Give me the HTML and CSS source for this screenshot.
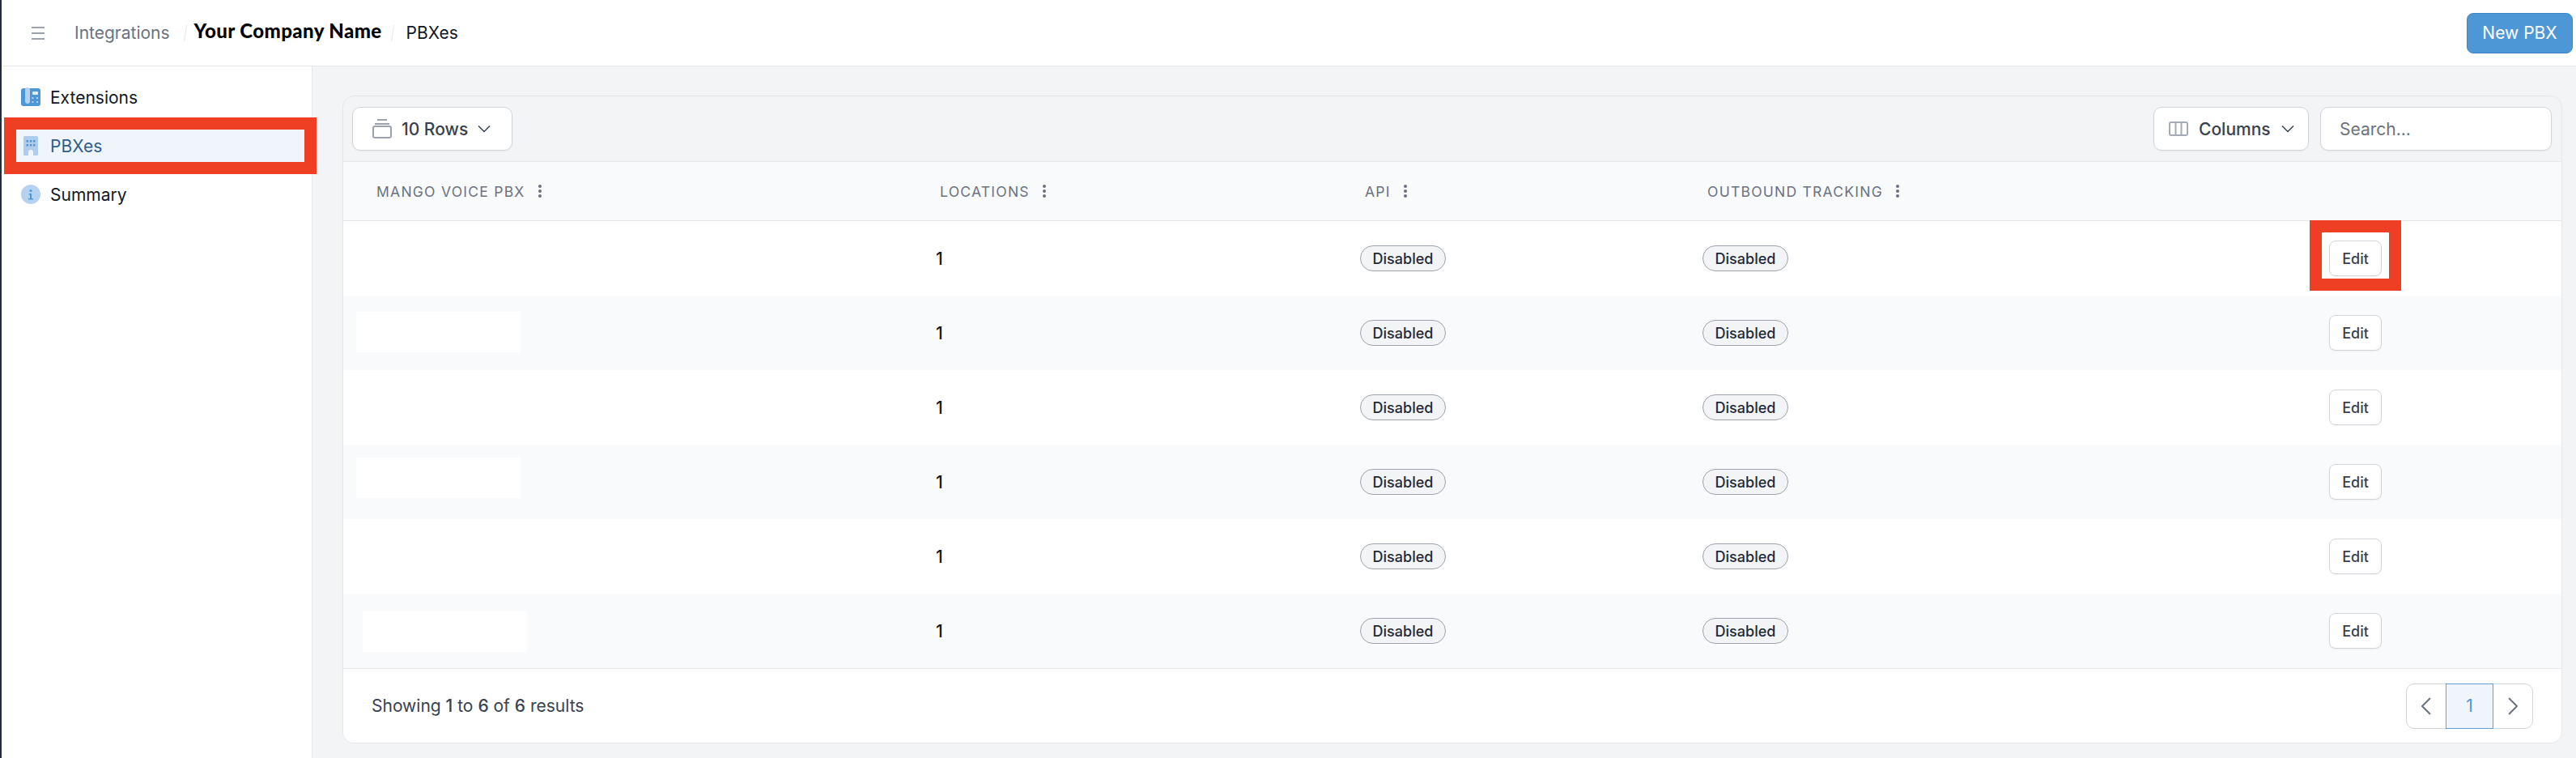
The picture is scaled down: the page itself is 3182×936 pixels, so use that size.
FILE: index.html
```html
<!DOCTYPE html>
<html lang="en">
<head>
<meta charset="utf-8">
<title>PBXes</title>
<link rel="stylesheet" href="styles.css">
</head>
<body>
<header class="topbar">
  <svg class="burger" viewBox="0 0 16 16" width="16" height="16"><path d="M0 1h16M0 8h16M0 15h16" fill="none" stroke="#9ca3af" stroke-width="2"/></svg>
  <span class="crumb crumb-muted">Integrations</span>
  <svg class="slash" viewBox="0 0 4 20" width="4" height="20"><path d="M3.500 0L.5 20" stroke="#e5e7eb" stroke-width="1" fill="none"/></svg>
  <span class="company">Your Company Name</span>
  <svg class="slash" viewBox="0 0 4 20" width="4" height="20"><path d="M3.500 0L.5 20" stroke="#e5e7eb" stroke-width="1" fill="none"/></svg>
  <span class="crumb crumb-last">PBXes</span>
  <button class="btn-primary">New PBX</button>
</header>
<div class="shell">
  <nav class="sidebar">
    <a class="nav-item">
      <svg class="nav-icon" viewBox="0 0 24 24" width="24" height="24"><rect y="1" width="24" height="22" rx="3" fill="#4e97d6"/><rect x="5" y="0" width="6" height="20" rx="3" fill="#b5d3f0"/><rect x="14" y="5" width="7" height="4" rx="1" fill="#dcebf8"/><g fill="#b5d3f0"><rect x="13.500" y="12" width="2" height="2"/><rect x="19" y="12" width="2" height="2"/><rect x="13.500" y="17" width="2" height="2"/><rect x="19" y="17" width="2" height="2"/></g></svg>
      <span>Extensions</span>
    </a>
    <a class="nav-item nav-item-active">
      <svg class="nav-icon" viewBox="0 0 24 24" width="24" height="24"><path d="M3 1.500Q3 0 4.500 0h15Q21 0 21 1.500V22.500Q21 24 19.500 24H15v-4a3 3 0 0 0-6 0v4H4.500Q3 24 3 22.500z" fill="#aecdec"/><g fill="#4e97d6"><rect x="6.500" y="5" width="2.500" height="2.500"/><rect x="10.800" y="5" width="2.500" height="2.500"/><rect x="15" y="5" width="2.500" height="2.500"/><rect x="6.500" y="10" width="2.500" height="2.500"/><rect x="10.800" y="10" width="2.500" height="2.500"/><rect x="15" y="10" width="2.500" height="2.500"/></g></svg>
      <span>PBXes</span>
      <i class="mark mark-nav"></i>
    </a>
    <a class="nav-item">
      <svg class="nav-icon" viewBox="0 0 24 24" width="24" height="24"><circle cx="12" cy="12" r="12" fill="#b5d3f0"/><circle cx="12" cy="7.500" r="1.500" fill="#4e97d6"/><path d="M9.500 11H13v6h2v1.500H9V17h2v-4.500H9.500z" fill="#4e97d6"/></svg>
      <span>Summary</span>
    </a>
  </nav>
  <main class="main">
    <section class="card">
      <div class="toolbar">
        <button class="tool tool-rows">
          <svg viewBox="0 0 24 24" width="24" height="24"><path d="M6 1h12M3 6h18" stroke="#9ca3af" stroke-width="2" fill="none"/><rect x="1" y="9" width="22" height="14" rx="2" stroke="#9ca3af" stroke-width="2" fill="none"/></svg>
          <span>10 Rows</span>
          <svg viewBox="0 0 16 10" width="16" height="10"><path d="M1 1.500l7 7 7-7" stroke="#374151" stroke-width="1.500" fill="none"/></svg>
        </button>
        <div class="spacer"></div>
        <button class="tool tool-cols">
          <svg viewBox="0 0 24 18" width="24" height="18"><rect x="1" y="1" width="22" height="16" rx="2" stroke="#a5abb6" stroke-width="2" fill="none"/><path d="M8.500 1v16M15.500 1v16" stroke="#a5abb6" stroke-width="2" fill="none"/></svg>
          <span>Columns</span>
          <svg viewBox="0 0 16 10" width="16" height="10"><path d="M1 1.500l7 7 7-7" stroke="#374151" stroke-width="1.500" fill="none"/></svg>
        </button>
        <input class="search" type="text" placeholder="Search...">
      </div>
      <div class="row row-head">
        <div class="th th-first">MANGO VOICE PBX<svg class="dots" viewBox="0 0 4 16" width="4" height="16"><g fill="#6b7280"><circle cx="2" cy="2" r="2"/><circle cx="2" cy="8" r="2"/><circle cx="2" cy="14" r="2"/></g></svg></div>
        <div class="th th-loc">LOCATIONS<svg class="dots" viewBox="0 0 4 16" width="4" height="16"><g fill="#6b7280"><circle cx="2" cy="2" r="2"/><circle cx="2" cy="8" r="2"/><circle cx="2" cy="14" r="2"/></g></svg></div>
        <div class="th th-badge">API<svg class="dots" viewBox="0 0 4 16" width="4" height="16"><g fill="#6b7280"><circle cx="2" cy="2" r="2"/><circle cx="2" cy="8" r="2"/><circle cx="2" cy="14" r="2"/></g></svg></div>
        <div class="th th-badge">OUTBOUND TRACKING<svg class="dots" viewBox="0 0 4 16" width="4" height="16"><g fill="#6b7280"><circle cx="2" cy="2" r="2"/><circle cx="2" cy="8" r="2"/><circle cx="2" cy="14" r="2"/></g></svg></div>
        <div></div>
      </div>
      <div class="row">
        <div class="td"></div>
        <div class="td td-num">1</div>
        <div class="td"><span class="badge">Disabled</span></div>
        <div class="td"><span class="badge">Disabled</span></div>
        <div class="td"><span class="edit-wrap"><button class="edit">Edit</button><i class="mark mark-edit"></i></span></div>
      </div>
      <div class="row row-alt">
        <div class="td td-first"><span class="redact redact-a"></span></div>
        <div class="td td-num">1</div>
        <div class="td"><span class="badge">Disabled</span></div>
        <div class="td"><span class="badge">Disabled</span></div>
        <div class="td"><button class="edit">Edit</button></div>
      </div>
      <div class="row">
        <div class="td"></div>
        <div class="td td-num">1</div>
        <div class="td"><span class="badge">Disabled</span></div>
        <div class="td"><span class="badge">Disabled</span></div>
        <div class="td"><button class="edit">Edit</button></div>
      </div>
      <div class="row row-alt">
        <div class="td td-first"><span class="redact redact-b"></span></div>
        <div class="td td-num">1</div>
        <div class="td"><span class="badge">Disabled</span></div>
        <div class="td"><span class="badge">Disabled</span></div>
        <div class="td"><button class="edit">Edit</button></div>
      </div>
      <div class="row">
        <div class="td"></div>
        <div class="td td-num">1</div>
        <div class="td"><span class="badge">Disabled</span></div>
        <div class="td"><span class="badge">Disabled</span></div>
        <div class="td"><button class="edit">Edit</button></div>
      </div>
      <div class="row row-alt">
        <div class="td td-first"><span class="redact redact-c"></span></div>
        <div class="td td-num">1</div>
        <div class="td"><span class="badge">Disabled</span></div>
        <div class="td"><span class="badge">Disabled</span></div>
        <div class="td"><button class="edit">Edit</button></div>
      </div>
      <footer class="foot">
        <span class="count">Showing <b>1</b> to <b>6</b> of <b>6</b> results</span>
        <div class="pager">
          <button class="page page-nav"><svg viewBox="0 0 12 22" width="12" height="22"><path d="M11 1L1 11l10 10" stroke="#6b7280" stroke-width="2" fill="none"/></svg></button>
          <button class="page page-current">1</button>
          <button class="page page-nav"><svg viewBox="0 0 12 22" width="12" height="22"><path d="M1 1l10 10L1 21" stroke="#6b7280" stroke-width="2" fill="none"/></svg></button>
        </div>
      </footer>
    </section>
  </main>
</div>
</body>
</html>
```
FILE: styles.css
```css
* { box-sizing: border-box; }
html, body { margin: 0; height: 936px; overflow: hidden; }
body {
  display: flex;
  flex-direction: column;
  border-left: 2px solid #1f2d3d;
  font-family: Inter, "Noto Sans", sans-serif;
  color: #111827;
  background: #fff;
}
button { font-family: inherit; cursor: pointer; }

/* top bar */
.topbar {
  height: 82px;
  flex: none;
  display: flex;
  align-items: center;
  padding: 0 4px 0 37px;
  border-bottom: 1px solid #e5e7eb;
  background: #fff;
}
.burger { margin-right: 37px; }
.crumb { font-size: 21px; color: #111827; }
.crumb-muted { color: #6b7280; }
.crumb-last { margin-left: 15px; }
.slash { margin-left: 17px; }
.company {
  font-family: Lato, sans-serif;
  font-weight: 900;
  font-size: 24px;
  letter-spacing: 0.4px;
  color: #000;
  margin: -6px -6px 0 9px;
}
.btn-primary {
  margin-left: auto;
  width: 131px;
  height: 50px;
  border: 1px solid #3f86c6;
  border-radius: 8px;
  background: #4e97d6;
  color: #fff;
  font-size: 21px;
}

/* shell */
.shell { flex: 1; display: flex; min-height: 0; }
.sidebar {
  width: 384px;
  flex: none;
  padding: 18px 0 0 18px;
  display: flex;
  flex-direction: column;
  gap: 20px;
  background: #fff;
  border-right: 1px solid #e5e7eb;
  position: relative;
  z-index: 1;
}
.nav-item {
  width: 356px;
  height: 40px;
  flex: none;
  display: flex;
  align-items: center;
  gap: 12px;
  padding-left: 6px;
  font-size: 21px;
  color: #111827;
  position: relative;
}
.nav-item-active { background: #f0f5fc; color: #2f5d8a; }
.nav-icon { flex: none; }

/* red annotation frames */
.mark { position: absolute; border: 15px solid #ee3f24; display: block; }
.mark-nav { top: -15px; bottom: -15px; left: -15px; right: -15px; }
.mark-edit { top: -25px; bottom: -18px; left: -24px; right: -24px; }

/* main */
.main { flex: 1; min-width: 0; background: #f3f4f6; padding: 36px 17px 18px 37px; }
.card {
  height: 800px;
  border: 1px solid #e5e7eb;
  border-radius: 14px;
  overflow: hidden;
  display: flex;
  flex-direction: column;
}
.toolbar {
  height: 81px;
  flex: none;
  display: flex;
  align-items: flex-start;
  gap: 14px;
  padding: 13px 12px 0 11px;
  border-bottom: 1px solid #e5e7eb;
}
.spacer { flex: 1; }
.tool {
  height: 54px;
  display: flex;
  align-items: center;
  background: #fff;
  border: 1px solid #d1d5db;
  border-radius: 10px;
  font-size: 21px;
  font-weight: 450;
  color: #374151;
  box-shadow: 0 1px 2px rgba(0,0,0,.05);
}
.tool-rows { width: 198px; padding: 0 0 0 24px; gap: 12px; }
.tool-cols { width: 192px; padding: 0 0 0 18px; gap: 13px; }
.search {
  width: 286px;
  height: 54px;
  padding: 0 23px;
  background: #fff;
  border: 1px solid #d1d5db;
  border-radius: 10px;
  font-family: inherit;
  font-size: 21px;
  color: #374151;
  box-shadow: 0 1px 2px rgba(0,0,0,.05);
}
.search::placeholder { color: #6b7280; opacity: 1; }

/* table */
.row {
  display: grid;
  grid-template-columns: 712px 520px 423px 774px 1fr;
  height: 92px;
  flex: none;
  background: #fff;
}
.row-alt { background: #f9fafb; }
.row-head {
  height: 73px;
  background: #f9fafb;
  border-bottom: 1px solid #e5e7eb;
}
.th {
  display: flex;
  align-items: center;
  font-size: 17.500px;
  font-weight: 400;
  letter-spacing: 1.250px;
  color: #6b7280;
}
.th-first { padding-left: 41px; }
.th-loc { padding-left: 25px; }
.th-badge { padding-left: 30px; }
.dots { margin-left: 16px; }
.td {
  display: flex;
  align-items: center;
  padding-left: 24px;
  font-size: 21px;
  font-weight: 400;
  color: #111827;
}
.td-num { padding-left: 20px; font-weight: 500; }
.td-first { padding-left: 0; align-items: flex-start; }
.redact { display: block; width: 203px; height: 50px; background: #fff; }
.redact-a { margin: 20px 0 0 16px; }
.redact-b { margin: 16px 0 0 16px; }
.redact-c { margin: 22px 0 0 24px; }
.badge {
  width: 106px;
  height: 32px;
  display: flex;
  align-items: center;
  justify-content: center;
  background: #f3f4f6;
  border: 1px solid #9ca3af;
  border-radius: 16px;
  font-size: 18px;
  font-weight: 450;
  color: #1f2937;
}
.edit-wrap { position: relative; display: block; }
.edit {
  display: block;
  width: 65px;
  height: 44px;
  padding: 0;
  background: #fff;
  border: 1px solid #d1d5db;
  border-radius: 8px;
  font-size: 18px;
  font-weight: 450;
  color: #374151;
  box-shadow: 0 1px 2px rgba(0,0,0,.05);
}

/* footer */
.foot {
  flex: 1;
  display: flex;
  align-items: center;
  justify-content: space-between;
  padding: 0 35px 0 35px;
  background: #fff;
  border-top: 1px solid #e5e7eb;
}
.count { font-size: 21px; color: #374151; }
.count b { font-weight: 500; }
.pager {
  display: flex;
  height: 56px;
  background: #fff;
  border: 1px solid #d1d5db;
  border-radius: 10px;
}
.page {
  padding: 0;
  display: flex;
  align-items: center;
  justify-content: center;
  background: transparent;
  border: 0;
}
.page-nav { width: 48px; }
.page-current {
  width: 59px;
  margin: -1px 0;
  height: 56px;
  background: #f0f5fc;
  border: 1px solid #5ba3e0;
  color: #4e97d6;
  font-size: 21px;
  font-weight: 400;
}
```
